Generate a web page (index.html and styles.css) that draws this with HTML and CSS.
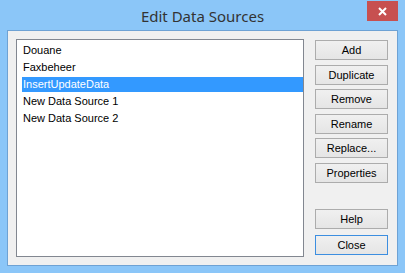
FILE: index.html
```html
<!DOCTYPE html>
<html lang="en">
<head>
    <meta charset="UTF-8">
    <title>Edit Data Sources</title>
    <link rel="stylesheet" href="styles.css">
</head>
<body>

<div class="window">
    <div class="titlebar">
        <span class="title">Edit Data Sources</span>
        <!-- Close box -->
        <button class="close-box">
            <svg width="9" height="9" viewBox="0 0 9 9">
                <path d="M1 1 L8 8 M8 1 L1 8" stroke="#fff" stroke-width="2" fill="none"/>
            </svg>
        </button>
    </div>

    <div class="client">
        <ul class="source-list">
            <li>Douane</li>
            <li>Faxbeheer</li>
            <li class="selected">InsertUpdateData</li>
            <li>New Data Source 1</li>
            <li>New Data Source 2</li>
        </ul>

        <div class="buttons">
            <button class="btn">Add</button>
            <button class="btn">Duplicate</button>
            <button class="btn">Remove</button>
            <button class="btn">Rename</button>
            <button class="btn">Replace...</button>
            <button class="btn">Properties</button>
            <div class="spacer"></div>
            <button class="btn">Help</button>
            <button class="btn default">Close</button>
        </div>
    </div>
</div>

</body>
</html>
```

FILE: styles.css
```css
body {
    margin: 0;
    background-color: #fff;
    font-family: 'Liberation Sans', Arial, sans-serif;
}
.window {
    width: 405px;
    height: 273px;
    box-sizing: border-box;
    background-color: #8bc6f8;
    display: flex;
    flex-direction: column;
}
.titlebar {
    position: relative;
    height: 30px;
    display: flex;
    justify-content: center;
    align-items: center;
}
.title {
    font-family: 'Noto Sans', sans-serif;
    font-size: 15px;
    color: #333;
    padding-top: 1px;
}
/* Red close box, sits over the title bar */
.close-box {
    position: absolute;
    top: 1px;
    right: 7px;
    width: 31px;
    height: 20px;
    border: none;
    padding: 0;
    background-color: #c75050;
    display: flex;
    justify-content: center;
    align-items: center;
}

.client {
    flex: 1;
    margin: 0 7px 7px 7px;
    border: 1px solid #6ea2d4;
    background-color: #f0f0f0;
    padding: 8px 9px 8px 8px;
    display: flex;
    gap: 11px;
}
.source-list {
    list-style: none;
    margin: 0;
    width: 288px;
    box-sizing: border-box;
    border: 1px solid #828790;
    background-color: #fff;
    padding: 3px 0 0 5px;
    font-size: 11px;
}
.source-list li {
    height: 15px;
    line-height: 15px;
    margin-bottom: 2px;
    padding-left: 1px;
    color: #000;
}
.source-list li.selected {
    background-color: #3399ff;
    color: #fff;
}

.buttons {
    display: flex;
    flex-direction: column;
    gap: 4.6px;
    padding-top: 1px;
}
.spacer {
    flex: 1;
}
.btn {
    width: 73px;
    height: 20px;
    box-sizing: border-box;
    border: 1px solid #acacac;
    background: linear-gradient(#f0f0f0, #e5e5e5);
    font-family: 'Liberation Sans', Arial, sans-serif;
    font-size: 11px;
    color: #000;
    padding: 0;
}
.btn.default {
    border-color: #3c8ee0;
    margin-top: 1.4px;
    margin-bottom: 2px;
}
```
